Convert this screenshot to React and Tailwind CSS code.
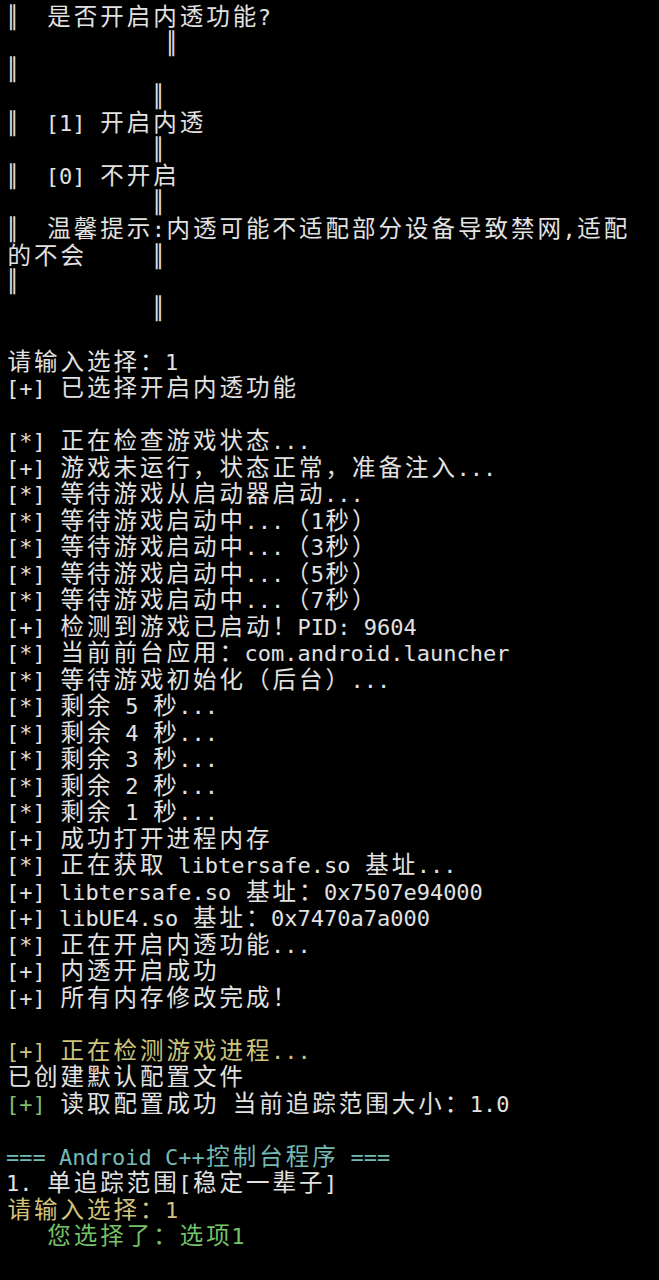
import React from 'react';

const WIDE = /[\u1100-\u115F\u2E80-\uA4CF\uAC00-\uD7A3\uF900-\uFAFF\uFE30-\uFE4F\uFF00-\uFF60\uFFE0-\uFFE6]/;

// terminal cells: ascii takes one column, CJK takes two
const Cells = ({ text }) => {
  const out = [];
  let run = '';
  Array.from(text).forEach((ch, i) => {
    if (WIDE.test(ch)) {
      if (run) {
        out.push(run);
        run = '';
      }
      out.push(
        <span key={i} className="inline-block w-[26.5px] text-center text-[23.5px] leading-[26.5px]">
          {ch}
        </span>
      );
    } else {
      run += ch;
    }
  });
  if (run) out.push(run);
  return <>{out}</>;
};

const lines = [
  [['║  是否开启内透功能?']],
  [['            ║']],
  [['║']],
  [['           ║']],
  [['║  [1] 开启内透']],
  [['           ║']],
  [['║  [0] 不开启']],
  [['           ║']],
  [['║  温馨提示:内透可能不适配部分设备导致禁网,适配']],
  [['的不会     ║']],
  [['║']],
  [['           ║']],
  [],
  [['请输入选择：1']],
  [['[+] 已选择开启内透功能']],
  [],
  [['[*] 正在检查游戏状态...']],
  [['[+] 游戏未运行，状态正常，准备注入...']],
  [['[*] 等待游戏从启动器启动...']],
  [['[*] 等待游戏启动中...（1秒）']],
  [['[*] 等待游戏启动中...（3秒）']],
  [['[*] 等待游戏启动中...（5秒）']],
  [['[*] 等待游戏启动中...（7秒）']],
  [['[+] 检测到游戏已启动！PID: 9604']],
  [['[*] 当前前台应用：com.android.launcher']],
  [['[*] 等待游戏初始化（后台）...']],
  [['[*] 剩余 5 秒...']],
  [['[*] 剩余 4 秒...']],
  [['[*] 剩余 3 秒...']],
  [['[*] 剩余 2 秒...']],
  [['[*] 剩余 1 秒...']],
  [['[+] 成功打开进程内存']],
  [['[*] 正在获取 libtersafe.so 基址...']],
  [['[+] libtersafe.so 基址：0x7507e94000']],
  [['[+] libUE4.so 基址：0x7470a7a000']],
  [['[*] 正在开启内透功能...']],
  [['[+] 内透开启成功']],
  [['[+] 所有内存修改完成！']],
  [],
  [['[+] 正在检测游戏进程...', 'text-[#cdc57c]']],
  [['已创建默认配置文件']],
  [['[+]', 'text-[#7fba6c]'], [' 读取配置成功 当前追踪范围大小：1.0']],
  [],
  [['=== Android C++控制台程序 ===', 'text-[#74b9b5]']],
  [['1. 单追踪范围[稳定一辈子]']],
  [['请输入选择：1', 'text-[#d2c47c]']],
  [['   您选择了：选项1', 'text-[#76c268]']],
];

const App = () => {
  return (
    <div className="min-h-[1280px] w-full bg-black pt-[4px] pl-[6px] text-[22px] leading-[26.5px] text-[#e2e2e2] font-['DejaVu_Sans_Mono','Noto_Sans_CJK_SC',monospace] overflow-hidden">
      {lines.map((segs, i) => (
        <div key={i} className="h-[26.5px] whitespace-pre">
          {segs.map(([text, cls], j) => (
            <span key={j} className={cls}>
              <Cells text={text} />
            </span>
          ))}
        </div>
      ))}
    </div>
  );
};

export default App;
